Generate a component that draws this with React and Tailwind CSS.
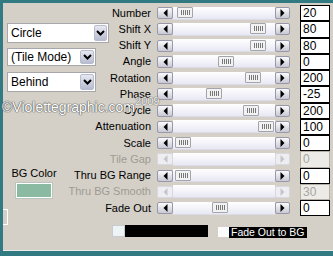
import React from 'react';

const rows = [
  { label: 'Number', value: '20', thumb: 4 },
  { label: 'Shift X', value: '80', thumb: 77 },
  { label: 'Shift Y', value: '80', thumb: 77 },
  { label: 'Angle', value: '0', thumb: 45 },
  { label: 'Rotation', value: '200', thumb: 72 },
  { label: 'Phase', value: '-25', thumb: 33 },
  { label: 'Cycle', value: '200', thumb: 70 },
  { label: 'Attenuation', value: '100', thumb: 85 },
  { label: 'Scale', value: '0', thumb: 2 },
  { label: 'Tile Gap', value: '0', disabled: true },
  { label: 'Thru BG Range', value: '0', thumb: 2 },
  { label: 'Thru BG Smooth', value: '30', disabled: true },
  { label: 'Fade Out', value: '0', thumb: 39 },
];

function Arrow({ dir, disabled }) {
  const fill = disabled ? '#c4c4cc' : '#000';
  return (
    <svg width="5" height="8" viewBox="0 0 5 8">
      {dir === 'left'
        ? <polygon points="4.5,0 4.5,8 0.5,4" fill={fill} />
        : <polygon points="0.5,0 0.5,8 4.5,4" fill={fill} />}
    </svg>
  );
}

function SlideButton({ dir, disabled, w }) {
  return (
    <div className={`${w} h-[12px] shrink-0 flex items-center justify-center rounded-[2px] border ${disabled ? 'border-[#d8d8e0] bg-[#eeeef2]' : 'border-[#9898a8] bg-gradient-to-b from-[#fbfbfd] to-[#c9c9d6]'}`}>
      <Arrow dir={dir} disabled={disabled} />
    </div>
  );
}

function Thumb() {
  return (
    <div className="w-[16px] h-[11px] border border-[#a4a4ac] bg-[#f2f2f2] rounded-[1px] flex items-center justify-center gap-[1px]">
      <div className="w-px h-[5px] bg-[#777]" />
      <div className="w-px h-[5px] bg-[#777]" />
      <div className="w-px h-[5px] bg-[#777]" />
      <div className="w-px h-[5px] bg-[#777]" />
      <div className="w-px h-[5px] bg-[#777]" />
    </div>
  );
}

function SliderRow({ row }) {
  const { label, value, thumb, disabled } = row;
  return (
    <div className="h-[16.25px] flex items-center">
      <div className={`w-[86px] text-right text-[11px] leading-none ${disabled ? 'text-[#9f9b93]' : 'text-black'}`}>{label}</div>
      <div className="ml-[6px] flex items-center">
        <SlideButton dir="left" disabled={disabled} w="w-[16px]" />
        <div className="w-[102px] h-[13px] flex items-center bg-gradient-to-b from-[#ffffff] to-[#e8e8f4] border-b border-[#dcdce6]">
          {thumb !== undefined && (
            <div style={{ marginLeft: thumb }}>
              <Thumb />
            </div>
          )}
        </div>
        <SlideButton dir="right" disabled={disabled} w="w-[15px]" />
      </div>
      <div className={`ml-[10px] w-[30px] h-full flex items-center pl-[2px] text-[12px] leading-none border ${disabled ? 'border-[#b4b0a8] bg-[#ecebe8] text-[#a9a59e]' : 'border-black bg-white text-black'}`}>
        {value}
      </div>
    </div>
  );
}

function Chevron() {
  return (
    <svg width="9" height="6" viewBox="0 0 9 6">
      <path d="M1 1 L4.5 4.5 L8 1" stroke="#000" strokeWidth="2" fill="none" />
    </svg>
  );
}

function Dropdown({ text, w, h, btnW }) {
  return (
    <div className={`${w} ${h} flex border border-[#a7a6aa] bg-white`}>
      <div className="flex-1 flex items-center pl-[3px] text-[12px] leading-none text-black">{text}</div>
      <div className={`${btnW} m-px flex items-center justify-center rounded-[2px] border border-[#b8bccc] bg-gradient-to-b from-[#e6e8f2] to-[#b8bcd0]`}>
        <Chevron />
      </div>
    </div>
  );
}

export default function App() {
  return (
    <div className="w-[333px] h-[256px] bg-[#317a82] pt-[3px] pl-[3px] overflow-hidden relative font-['Liberation_Sans',Arial,sans-serif]">
      <div className="h-[248px] bg-[#d4d0c8] border-b border-[#ecebe7] flex">
        {/* left column */}
        <div className="w-[62px] shrink-0 flex flex-col pt-[20px]">
          <div className="ml-[4px] flex flex-col">
            <Dropdown text="Circle" w="w-[102px]" h="h-[20px]" btnW="w-[13px]" />
            <div className="mt-[5px]">
              <Dropdown text="(Tile Mode)" w="w-[89px]" h="h-[18px]" btnW="w-[14px]" />
            </div>
            <div className="mt-[6px]">
              <Dropdown text="Behind" w="w-[89px]" h="h-[20px]" btnW="w-[14px]" />
            </div>
          </div>
          <div className="mt-[75px] text-center text-[11px] leading-[13px] text-black">BG Color</div>
          <div className="mt-[3px] ml-[13px] w-[36px] h-[15px] border border-white bg-[#8bbaa3] outline outline-1 outline-[#b9c4bd]" />
          <div className="mt-[11px] w-[5px] h-[16px] border border-l-0 border-white" />
        </div>

        {/* right column */}
        <div className="flex-1 flex flex-col pt-[2px]">
          {rows.map((r) => (
            <SliderRow key={r.label} row={r} />
          ))}
          <div className="mt-[9px] ml-[47px] flex items-start">
            <div className="w-[13px] h-[12px] border border-[#c8ccd0] bg-[#eef3f6]" />
            <div className="w-[83px] h-[12px] bg-black" />
            <div className="ml-[10px] mt-[2px] w-[11px] h-[10px] bg-[#fbfbfb]" />
            <div className="mt-[2px] w-[78px] h-[11px] bg-black text-white text-[10.5px] leading-[11px] pl-[2px] whitespace-nowrap overflow-hidden">Fade Out to BG</div>
          </div>
        </div>
      </div>

      {/* watermark */}
      <div className="absolute left-[2px] top-[100px] flex items-start text-white text-[14px] leading-none pointer-events-none [text-shadow:0_0_1px_#555,0_0_1px_#555,0_0_1px_#555]">
        <span>©Violettegraphic.com</span>
        <span className="text-[11px] -mt-[4px] opacity-70">2009</span>
      </div>
    </div>
  );
}
